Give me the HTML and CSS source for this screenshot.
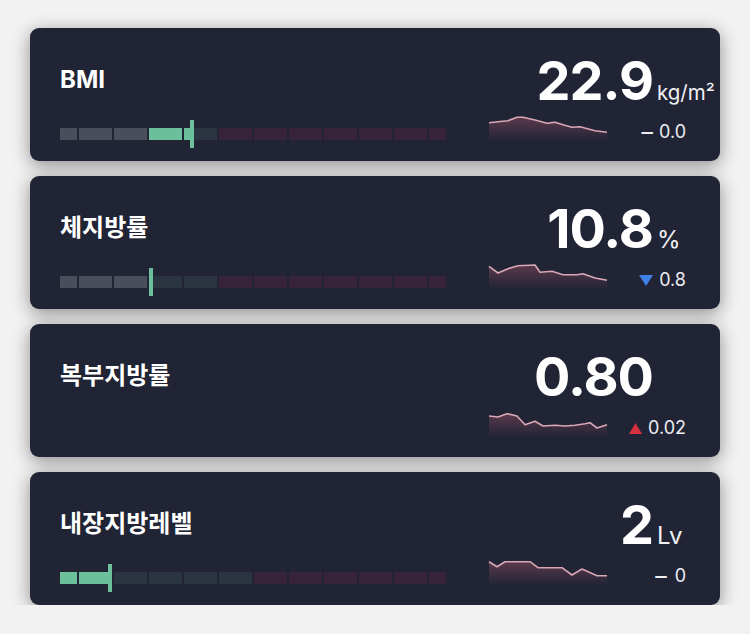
FILE: index.html
```html
<!DOCTYPE html>
<html lang="ko">
<head>
<meta charset="utf-8">
<title>Body metrics</title>
<link rel="stylesheet" href="styles.css">
</head>
<body>
<main class="list">

  <section class="card">
    <div class="left">
      <h2 class="title">BMI</h2>
      <div class="bar">
        <span class="seg seg-sm gray"></span>
        <span class="seg gray"></span>
        <span class="seg gray"></span>
        <span class="seg green"></span>
        <span class="seg teal"><span class="fill" style="width:6px"></span></span>
        <span class="seg red"></span>
        <span class="seg red"></span>
        <span class="seg red"></span>
        <span class="seg red"></span>
        <span class="seg red"></span>
        <span class="seg red"></span>
        <span class="seg seg-sm red"></span>
        <span class="marker" style="left:130px"></span>
      </div>
    </div>
    <div class="right">
      <div class="value"><span class="num">22.9</span><span class="unit unit-sm">kg/m²</span></div>
      <div class="trend">
        <svg class="spark" width="118" height="26" viewBox="0 0 118 26">
          <defs><linearGradient id="g1" x1="0" y1="0" x2="0" y2="1"><stop offset="0" stop-color="#5b3a4c"/><stop offset="1" stop-color="#5b3a4c" stop-opacity="0"/></linearGradient></defs>
          <path d="M0,7.7 L9,6.7 L19,5.7 L28,2.3 L34,2.3 L46,5 L58,8.3 L66,7.3 L74,9.7 L83,12.3 L91,11.7 L106,15.7 L118,17.3 L118,26 L0,26 Z" fill="url(#g1)"/>
          <polyline points="0,7.7 9,6.7 19,5.7 28,2.3 34,2.3 46,5 58,8.3 66,7.3 74,9.7 83,12.3 91,11.7 106,15.7 118,17.3" fill="none" stroke="#d9a7b6" stroke-width="1.6" stroke-linejoin="round"/>
        </svg>
        <div class="delta"><span class="ind dash">–</span><span>0.0</span></div>
      </div>
    </div>
  </section>

  <section class="card">
    <div class="left">
      <h2 class="title">체지방률</h2>
      <div class="bar">
        <span class="seg seg-sm gray"></span>
        <span class="seg gray"></span>
        <span class="seg gray"></span>
        <span class="seg teal"></span>
        <span class="seg teal"></span>
        <span class="seg red"></span>
        <span class="seg red"></span>
        <span class="seg red"></span>
        <span class="seg red"></span>
        <span class="seg red"></span>
        <span class="seg red"></span>
        <span class="seg seg-sm red"></span>
        <span class="marker" style="left:89px"></span>
      </div>
    </div>
    <div class="right">
      <div class="value"><span class="num">10.8</span><span class="unit">%</span></div>
      <div class="trend">
        <svg class="spark" width="118" height="26" viewBox="0 0 118 26">
          <defs><linearGradient id="g2" x1="0" y1="0" x2="0" y2="1"><stop offset="0" stop-color="#5b3a4c"/><stop offset="1" stop-color="#5b3a4c" stop-opacity="0"/></linearGradient></defs>
          <path d="M0,3.3 L9,10 L19,5.7 L29,2.7 L46,2 L51,9.3 L63,8.3 L74,11.7 L88,11.7 L94,10.7 L106,15 L118,17.3 L118,26 L0,26 Z" fill="url(#g2)"/>
          <polyline points="0,3.3 9,10 19,5.7 29,2.7 46,2 51,9.3 63,8.3 74,11.7 88,11.7 94,10.7 106,15 118,17.3" fill="none" stroke="#d9a7b6" stroke-width="1.6" stroke-linejoin="round"/>
        </svg>
        <div class="delta">
          <svg class="ind" width="14" height="11" viewBox="0 0 14 11"><path d="M0,0 L14,0 L7,11 Z" fill="#3f7fe6"/></svg>
          <span>0.8</span>
        </div>
      </div>
    </div>
  </section>

  <section class="card">
    <div class="left">
      <h2 class="title">복부지방률</h2>
    </div>
    <div class="right">
      <div class="value"><span class="num">0.80</span><span class="unit"></span></div>
      <div class="trend">
        <svg class="spark" width="118" height="26" viewBox="0 0 118 26">
          <defs><linearGradient id="g3" x1="0" y1="0" x2="0" y2="1"><stop offset="0" stop-color="#5b3a4c"/><stop offset="1" stop-color="#5b3a4c" stop-opacity="0"/></linearGradient></defs>
          <path d="M0,5 L9,6 L18,2.7 L28,5 L36,13.7 L46,10.3 L54,15 L66,14.3 L76,15 L86,14.3 L96,12.7 L101,11.7 L108,17 L118,13.7 L118,26 L0,26 Z" fill="url(#g3)"/>
          <polyline points="0,5 9,6 18,2.7 28,5 36,13.7 46,10.3 54,15 66,14.3 76,15 86,14.3 96,12.7 101,11.7 108,17 118,13.7" fill="none" stroke="#d9a7b6" stroke-width="1.6" stroke-linejoin="round"/>
        </svg>
        <div class="delta">
          <svg class="ind" width="13" height="11" viewBox="0 0 13 11"><path d="M0,11 L13,11 L6.5,0 Z" fill="#d7303f"/></svg>
          <span>0.02</span>
        </div>
      </div>
    </div>
  </section>

  <section class="card">
    <div class="left">
      <h2 class="title">내장지방레벨</h2>
      <div class="bar">
        <span class="seg seg-sm green"></span>
        <span class="seg green"></span>
        <span class="seg teal"></span>
        <span class="seg teal"></span>
        <span class="seg teal"></span>
        <span class="seg teal"></span>
        <span class="seg red"></span>
        <span class="seg red"></span>
        <span class="seg red"></span>
        <span class="seg red"></span>
        <span class="seg red"></span>
        <span class="seg seg-sm red"></span>
        <span class="marker" style="left:48px"></span>
      </div>
    </div>
    <div class="right">
      <div class="value"><span class="num">2</span><span class="unit">Lv</span></div>
      <div class="trend">
        <svg class="spark" width="118" height="26" viewBox="0 0 118 26">
          <defs><linearGradient id="g4" x1="0" y1="0" x2="0" y2="1"><stop offset="0" stop-color="#5b3a4c"/><stop offset="1" stop-color="#5b3a4c" stop-opacity="0"/></linearGradient></defs>
          <path d="M0,2.7 L8,7.7 L16,2.7 L41,2.7 L49,8.7 L73,8.7 L83,16 L93,10 L108,16.7 L118,16.7 L118,26 L0,26 Z" fill="url(#g4)"/>
          <polyline points="0,2.7 8,7.7 16,2.7 41,2.7 49,8.7 73,8.7 83,16 93,10 108,16.7 118,16.7" fill="none" stroke="#d9a7b6" stroke-width="1.6" stroke-linejoin="round"/>
        </svg>
        <div class="delta delta-wide"><span class="ind dash">–</span><span>0</span></div>
      </div>
    </div>
  </section>

</main>
</body>
</html>
```

FILE: styles.css
```css
* { box-sizing: border-box; }

html, body {
  margin: 0;
  padding: 0;
  background: #f2f2f2;
}

body {
  font-family: Inter, "Noto Sans CJK KR", sans-serif;
  color: #ffffff;
}

.list {
  display: flex;
  flex-direction: column;
  gap: 15px;
  width: 690px;
  margin: 28px 0 0 30px;
}

.card {
  display: flex;
  justify-content: space-between;
  height: 133px;
  background: #212435;
  border-radius: 9px;
  box-shadow: 0 4px 18px rgba(0, 0, 0, 0.42);
  padding: 0 34px 0 30px;
}

.left {
  padding-top: 37px;
}

.title {
  margin: 0;
  font-size: 24px;
  line-height: 30px;
  font-weight: 700;
  letter-spacing: 0;
}

.bar {
  position: relative;
  display: flex;
  gap: 2px;
  margin-top: 33px;
  height: 12px;
}

.seg {
  position: relative;
  display: block;
  width: 33px;
  height: 12px;
  overflow: hidden;
}

.seg-sm { width: 17px; }

.gray { background: #4a4d5a; }
.green { background: #6bbf9b; }
.teal { background: #2a3541; }
.red { background: #37243a; }

.fill {
  display: block;
  height: 100%;
  background: #6bbf9b;
}

.marker {
  position: absolute;
  top: -8px;
  width: 4px;
  height: 28px;
  background: #6bbf9b;
}

.right {
  width: 197px;
  padding-top: 26px;
}

.value {
  display: flex;
  justify-content: flex-end;
  align-items: baseline;
  height: 54px;
  line-height: 54px;
}

.num {
  font-size: 54px;
  font-weight: 700;
  letter-spacing: -1px;
}

.unit {
  width: 33px;
  padding-left: 4px;
  font-size: 24px;
  font-weight: 400;
  white-space: nowrap;
  color: #f0f0f4;
}

.unit-sm { font-size: 20.5px; }

.trend {
  display: flex;
  justify-content: space-between;
  align-items: flex-end;
  margin-top: 7px;
}

.spark {
  display: block;
  overflow: visible;
}

.delta {
  display: flex;
  align-items: center;
  gap: 6px;
  height: 18px;
  font-size: 18px;
  line-height: 18px;
  color: #eceef3;
}

.delta-wide { gap: 8px; }

.ind {
  display: block;
}

.dash {
  font-size: 23px;
  line-height: 18px;
}
```
